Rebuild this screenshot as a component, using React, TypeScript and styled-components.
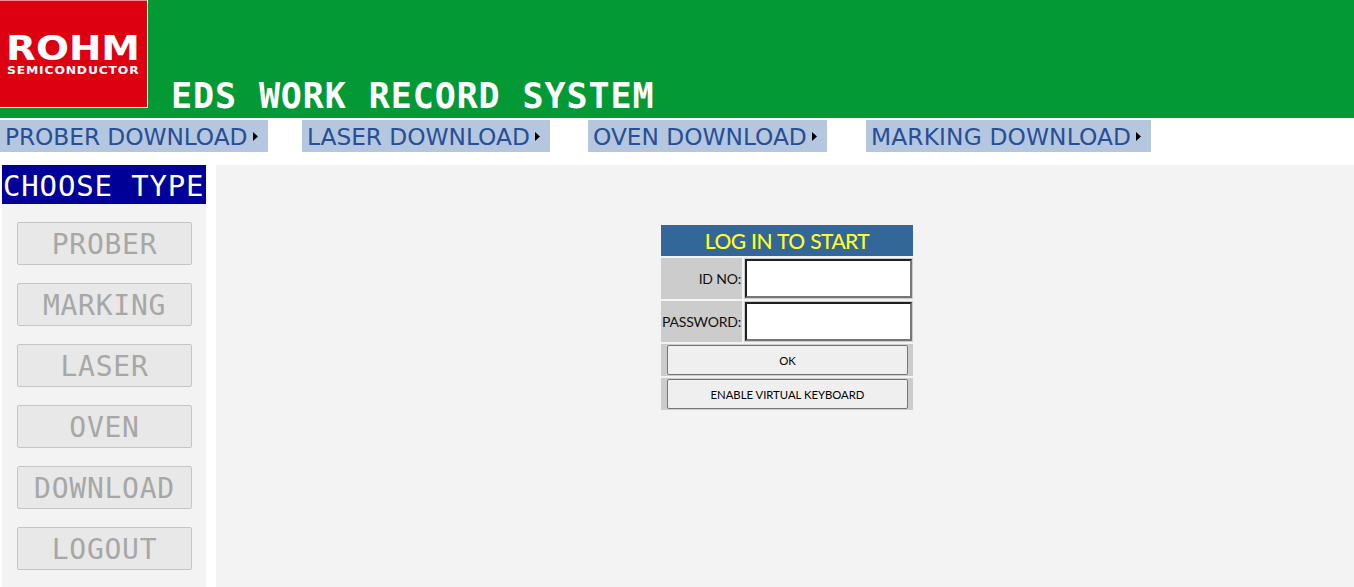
import React from "react";
import styled, { createGlobalStyle } from "styled-components";

const GlobalStyle = createGlobalStyle`
  * { box-sizing: border-box; }
  html, body { margin: 0; background: #fff; overflow: hidden; }
`;

const mono = `"DejaVu Sans Mono", monospace`;
const form = `Lato, sans-serif`;

const Page = styled.div`
  display: flex;
  flex-direction: column;
  height: 587px;
  overflow: hidden;
`;

const Header = styled.header`
  display: flex;
  flex: none;
  height: 118px;
  background: #039a35;
`;

const Logo = styled.svg`
  display: block;
  flex: none;
  width: 148px;
  height: 108px;
`;

const Title = styled.h1`
  margin: 76px 0 0 23px;
  font: bold 35px/40px ${mono};
  letter-spacing: 0.9px;
  color: #fff;
  white-space: nowrap;
`;

const Nav = styled.nav`
  display: flex;
  flex: none;
  height: 47px;
  padding-top: 2px;
`;

const NavItem = styled.a<{ $width: number; $gap: number }>`
  display: flex;
  align-items: center;
  width: ${(p) => p.$width}px;
  height: 32px;
  margin-right: ${(p) => p.$gap}px;
  padding-left: 5px;
  background: #b5c7de;
  color: #284e98;
  font: 23.3px/32px "DejaVu Sans", sans-serif;
  white-space: nowrap;
`;

const NavLabel = styled.span<{ $width: number; $spacing: number }>`
  width: ${(p) => p.$width}px;
  padding-top: 2px;
  letter-spacing: ${(p) => p.$spacing}px;
`;

const Arrow = styled.svg`
  flex: none;
  width: 5px;
  height: 9px;
  margin-left: 6px;
`;

const Body = styled.div`
  display: flex;
  flex: 1;
  min-height: 0;
  gap: 10px;
  padding-left: 2px;
`;

const Sidebar = styled.aside`
  display: flex;
  flex-direction: column;
  align-items: center;
  width: 204px;
  background: #f3f3f3;
`;

const SidebarTitle = styled.div`
  flex: none;
  width: 204px;
  height: 39px;
  margin-bottom: 18px;
  padding-left: 1px;
  background: #000099;
  color: #fff;
  font: 29px/43px ${mono};
  letter-spacing: 0.85px;
  white-space: nowrap;
`;

const TypeButton = styled.button`
  flex: none;
  width: 175px;
  height: 43px;
  margin: 0 0 18px 1px;
  padding: 1px 0 0;
  border: 1px solid #c5c5c5;
  border-radius: 2px;
  background: #e8e8e8;
  color: #a7a7a7;
  font: 28px/41px ${mono};
  letter-spacing: 0.74px;
`;

const Main = styled.main`
  flex: 1;
  padding: 60px 0 0 445px;
  background: #f3f3f3;
`;

const LoginForm = styled.form`
  display: flex;
  flex-direction: column;
  gap: 2px;
  width: 252px;
  font-family: ${form};
`;

const FormTitle = styled.div`
  height: 31px;
  background: #336699;
  color: #ffff22;
  font-size: 21px;
  font-weight: 500;
  line-height: 32px;
  letter-spacing: -0.6px;
  word-spacing: 1px;
  text-align: center;
`;

const Field = styled.label`
  display: flex;
  gap: 2px;
  height: 41px;
`;

const FieldLabel = styled.span`
  width: 81px;
  padding-right: 1px;
  background: #ccc;
  color: #111;
  font-size: 14px;
  line-height: 42px;
  letter-spacing: -0.2px;
  text-align: right;
  white-space: nowrap;
`;

const FieldCell = styled.span`
  display: flex;
  width: 169px;
  padding: 1px;
  background: #ccc;
`;

const Input = styled.input`
  width: 167px;
  height: 39px;
  border: 2px solid;
  border-color: #202024 #767676 #767676 #202024;
  background: #fff;
  outline: none;
`;

const ActionRow = styled.div`
  height: 32px;
  padding: 1px 5px 1px 6px;
  background: #ccc;
`;

const ActionButton = styled.button`
  display: block;
  width: 241px;
  height: 30px;
  padding: 1px 0 0;
  border: 1px solid #767676;
  border-radius: 2px;
  background: #efefef;
  color: #000;
  font: 11.3px/28px ${form};
`;

const menu = [
  { text: "PROBER DOWNLOAD", width: 268, label: 242, gap: 34, spacing: -0.08 },
  { text: "LASER DOWNLOAD", width: 248, label: 222, gap: 38, spacing: -0.03 },
  { text: "OVEN DOWNLOAD", width: 239, label: 213, gap: 39, spacing: -0.03 },
  { text: "MARKING DOWNLOAD", width: 285, label: 259, gap: 0, spacing: 0.14 },
];

const types = ["PROBER", "MARKING", "LASER", "OVEN", "DOWNLOAD", "LOGOUT"];

export default function App() {
  return (
    <Page>
      <GlobalStyle />
      <Header>
        <Logo viewBox="0 0 148 108" role="img" aria-label="ROHM Semiconductor">
          <rect width="148" height="108" fill="#fff" />
          <rect width="147" height="1" fill="#f08b94" />
          <rect y="1" width="147" height="106" fill="#dc0011" />
          <g fill="#fff" fontFamily="DejaVu Sans, sans-serif" fontWeight="bold">
            <text x="6" y="60" fontSize="34" textLength="134" lengthAdjust="spacingAndGlyphs">ROHM</text>
            <text x="7" y="74" fontSize="10" letterSpacing="0.7" textLength="132.5" lengthAdjust="spacingAndGlyphs">SEMICONDUCTOR</text>
          </g>
        </Logo>
        <Title>EDS WORK RECORD SYSTEM</Title>
      </Header>
      <Nav>
        {menu.map((m) => (
          <NavItem key={m.text} $width={m.width} $gap={m.gap}>
            <NavLabel $width={m.label} $spacing={m.spacing}>{m.text}</NavLabel>
            <Arrow viewBox="0 0 5 9">
              <path d="M0 0 L5 4.5 L0 9Z" fill="#000" />
            </Arrow>
          </NavItem>
        ))}
      </Nav>
      <Body>
        <Sidebar>
          <SidebarTitle>CHOOSE TYPE</SidebarTitle>
          {types.map((t) => (
            <TypeButton key={t} disabled>{t}</TypeButton>
          ))}
        </Sidebar>
        <Main>
          <LoginForm>
            <FormTitle>LOG IN TO START</FormTitle>
            <Field>
              <FieldLabel>ID NO:</FieldLabel>
              <FieldCell><Input type="text" /></FieldCell>
            </Field>
            <Field>
              <FieldLabel>PASSWORD:</FieldLabel>
              <FieldCell><Input type="password" /></FieldCell>
            </Field>
            <ActionRow><ActionButton type="button">OK</ActionButton></ActionRow>
            <ActionRow><ActionButton type="button">ENABLE VIRTUAL KEYBOARD</ActionButton></ActionRow>
          </LoginForm>
        </Main>
      </Body>
    </Page>
  );
}
